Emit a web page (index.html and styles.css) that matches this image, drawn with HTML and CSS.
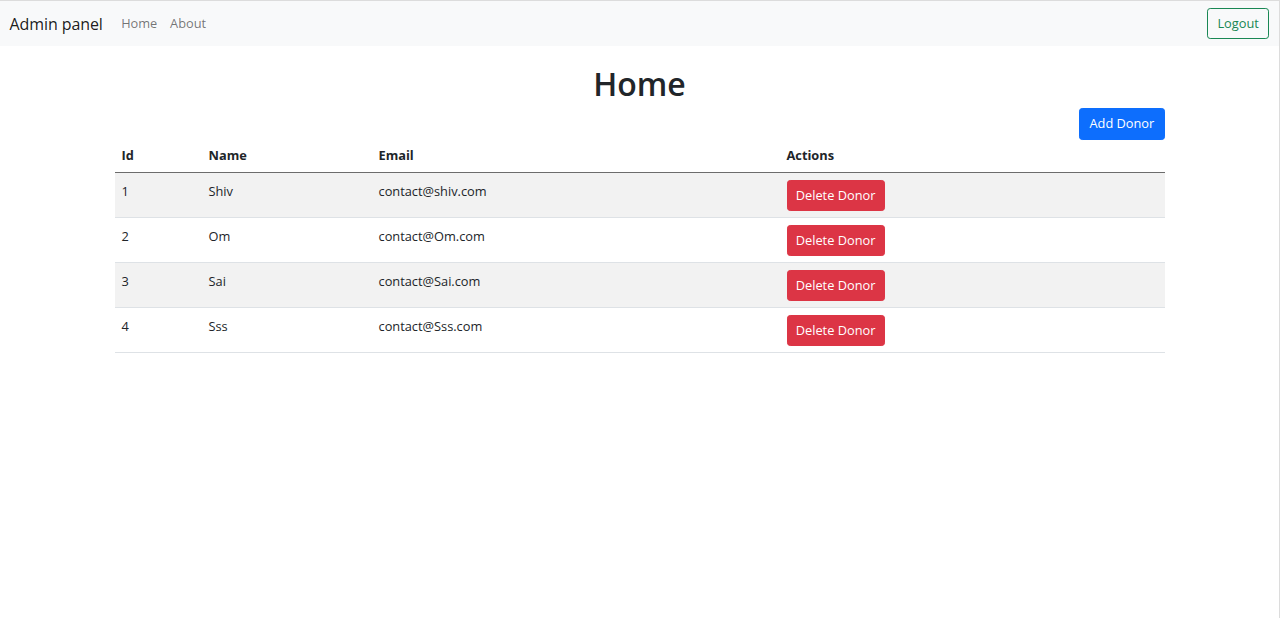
FILE: index.html
```html
<!DOCTYPE html>
<html lang="en">
<head>
<meta charset="utf-8">
<title>Admin panel</title>
<link rel="stylesheet" href="styles.css">
</head>
<body>
<div class="frame">
  <nav class="navbar">
    <div class="nav-left">
      <a class="brand" href="#">Admin panel</a>
      <a class="nav-link" href="#">Home</a>
      <a class="nav-link" href="#">About</a>
    </div>
    <button class="btn btn-outline-success">Logout</button>
  </nav>
  <main class="container">
    <h1 class="title">Home</h1>
    <div class="toolbar">
      <button class="btn btn-primary">Add Donor</button>
    </div>
    <table class="table">
      <thead>
        <tr>
          <th class="c-id">Id</th>
          <th class="c-name">Name</th>
          <th class="c-email">Email</th>
          <th>Actions</th>
        </tr>
      </thead>
      <tbody>
        <tr class="striped">
          <td>1</td><td>Shiv</td><td>contact@shiv.com</td>
          <td><button class="btn btn-danger">Delete Donor</button></td>
        </tr>
        <tr>
          <td>2</td><td>Om</td><td>contact@Om.com</td>
          <td><button class="btn btn-danger">Delete Donor</button></td>
        </tr>
        <tr class="striped">
          <td>3</td><td>Sai</td><td>contact@Sai.com</td>
          <td><button class="btn btn-danger">Delete Donor</button></td>
        </tr>
        <tr>
          <td>4</td><td>Sss</td><td>contact@Sss.com</td>
          <td><button class="btn btn-danger">Delete Donor</button></td>
        </tr>
      </tbody>
    </table>
  </main>
</div>
</body>
</html>
```
FILE: styles.css
```css
* { box-sizing: border-box; }
html, body { margin: 0; padding: 0; }
body {
  font-family: "Open Sans", "Noto Sans", sans-serif;
  font-size: 12.8px;
  line-height: 1.5;
  color: #212529;
  background: #fff;
}
.frame {
  min-height: 618px;
  border-top: 1px solid #dcdcdc;
  border-right: 1px solid #dcdcdc;
}
.navbar {
  display: flex;
  align-items: center;
  justify-content: space-between;
  height: 45px;
  padding: 0 9.6px;
  background: #f8f9fa;
}
.nav-left { display: flex; align-items: center; }
.brand {
  font-size: 16px;
  color: rgba(0,0,0,.9);
  text-decoration: none;
  margin-right: 12px;
  padding: 4px 0;
  letter-spacing: -0.1px;
}
.nav-link {
  color: rgba(0,0,0,.55);
  text-decoration: none;
  padding: 6.4px;
}
.btn {
  font-family: inherit;
  font-size: 12.8px;
  line-height: 1.5;
  height: 31px;
  padding: 0 9.6px;
  border-radius: 3.2px;
  border: 1px solid transparent;
  cursor: pointer;
}
.btn-outline-success { color: #198754; border-color: #198754; background: transparent; }
.btn-primary { color: #fff; background: #0d6efd; border-color: #0d6efd; height: 32px; padding: 0 9.2px; }
.btn-danger { color: #fff; background: #dc3545; border-color: #dc3545; padding: 0 8.2px; }
.container {
  width: 1050px;
  margin: 0 auto;
  padding-top: 19px;
}
.title {
  font-size: 32px;
  font-weight: 600;
  line-height: 1.2;
  text-align: center;
  margin: 0 0 4.4px;
}
.toolbar { display: flex; justify-content: flex-end; }
.table {
  width: 100%;
  border-collapse: collapse;
  margin-bottom: 12.8px;
}
.table th, .table td {
  text-align: left;
  vertical-align: top;
  padding: 7px 7px 6px;
  border-bottom: 1px solid #dee2e6;
}
.table td { line-height: 22px; }
.table th { font-weight: 700; border-bottom: 1.5px solid #6c6c6c; padding-top: 6.5px; padding-bottom: 6.5px; }
.c-id { width: 87px; }
.c-name { width: 170px; }
.c-email { width: 408px; }
.striped td { background: #f2f2f2; }
```
